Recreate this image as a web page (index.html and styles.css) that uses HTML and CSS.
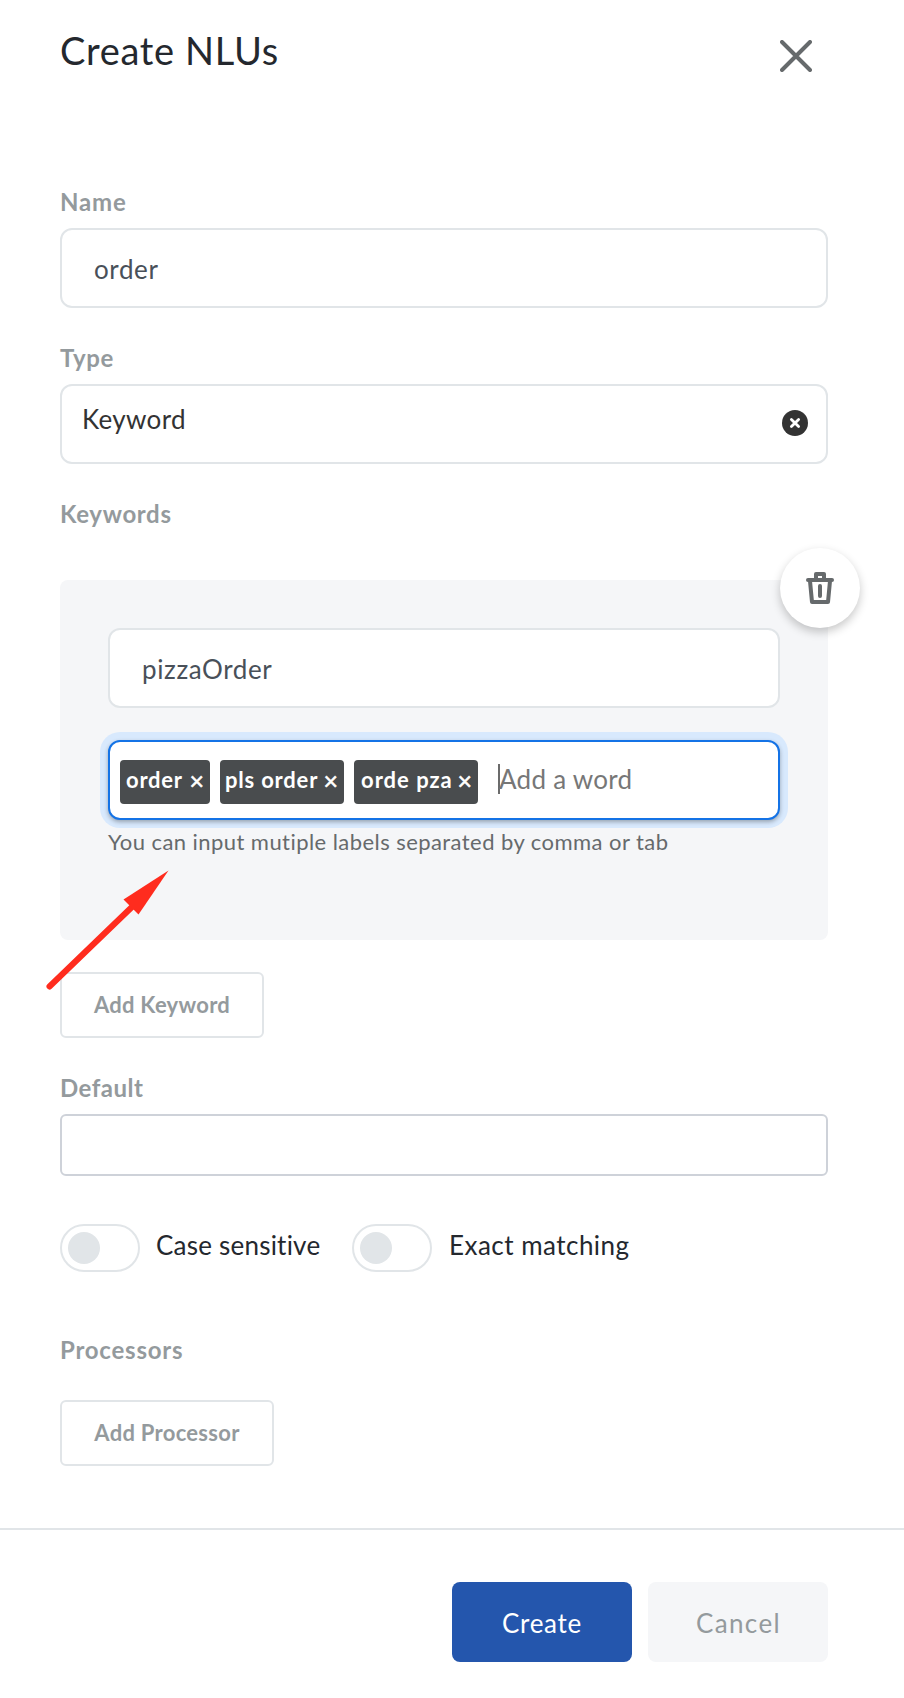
FILE: index.html
```html
<!DOCTYPE html>
<html lang="en">
<head>
<meta charset="utf-8">
<title>Create NLUs</title>
<link rel="stylesheet" href="styles.css">
</head>
<body>
<main class="dialog">
  <header class="dialog-header">
    <h1 class="title">Create NLUs</h1>
    <button class="close" aria-label="Close">
      <svg width="32" height="32" viewBox="0 0 32 32"><path d="M2 2L30 30M30 2L2 30" fill="none" stroke="#666a6c" stroke-width="4" stroke-linecap="round"/></svg>
    </button>
  </header>

  <section class="field">
    <div class="label label-name">Name</div>
    <div class="box box-order">order</div>
  </section>

  <section class="field">
    <div class="label label-type">Type</div>
    <div class="box box-select">
      <span class="select-value">Keyword</span>
      <svg class="clear" width="26" height="26" viewBox="0 0 26 26"><circle cx="13" cy="13" r="13" fill="#333"/><path d="M9.4 9.4L16.6 16.6M16.6 9.4L9.4 16.6" fill="none" stroke="#fff" stroke-width="2.8" stroke-linecap="round"/></svg>
    </div>
  </section>

  <div class="label label-keywords">Keywords</div>
  <section class="panel">
    <button class="trash" aria-label="Delete">
      <svg width="28" height="32" viewBox="0 0 28 32" fill="none" stroke="#666a6c" stroke-width="4" stroke-linecap="round" stroke-linejoin="round"><path d="M2 8H26"/><path d="M10 7V2H18V7"/><path d="M4 9L6 30H22L24 9"/><path d="M14 14V24"/></svg>
    </button>
    <div class="box box-pizza">pizzaOrder</div>
    <div class="box tags">
      <span class="tag tag-short"><span class="tag-order">order</span><span class="x">×</span></span>
      <span class="tag"><span class="tag-pls">pls order</span><span class="x">×</span></span>
      <span class="tag"><span class="tag-orde">orde pza</span><span class="x">×</span></span>
      <span class="placeholder">Add a word</span>
    </div>
    <p class="hint">You can input mutiple labels separated by comma or tab</p>
    <svg class="arrow" width="130" height="126" viewBox="45 868 130 126"><path d="M49.5 986.5L134 905" stroke="#ff2c1e" stroke-width="6" stroke-linecap="round"/><path d="M168.5 870.5L123.5 899.5L138.5 914.5Z" fill="#ff2c1e"/></svg>
  </section>
  <button class="outline outline-keyword">Add Keyword</button>

  <div class="label label-default">Default</div>
  <div class="default-box"></div>

  <div class="toggles">
    <span class="toggle"></span><span class="toggle-text case">Case sensitive</span>
    <span class="toggle"></span><span class="toggle-text exact">Exact matching</span>
  </div>

  <div class="label label-processors">Processors</div>
  <button class="outline outline-processor">Add Processor</button>
</main>
<footer class="footer">
  <button class="action create">Create</button>
  <button class="action cancel">Cancel</button>
</footer>
</body>
</html>
```

FILE: styles.css
```css
* { box-sizing: border-box; }
body { margin: 0; background: #fff; color: #24282e; font: 26px/32px "Lato", sans-serif; }
button { margin: 0; padding: 0; border: 0; background: none; font-family: inherit; display: block; }
.dialog { height: 1528px; padding: 19px 76px 0 60px; }
.dialog-header { display: flex; justify-content: space-between; height: 166px; }
.title { margin: 0; font-size: 38px; line-height: 62px; font-weight: 400; letter-spacing: .68px; }
.close { width: 32px; height: 32px; margin: 21px 16px 0 0; }
.close svg, .trash svg { display: block; }
.field { height: 156px; }
.label { height: 32px; font-size: 24px; line-height: 34px; font-weight: 700; color: #949a9d; }
.label-name { letter-spacing: .85px; }
.label-type { letter-spacing: .6px; }
.label-keywords { letter-spacing: .66px; }
.label-default { letter-spacing: .5px; margin-top: 33px; }
.label-processors { letter-spacing: .77px; margin-top: 61px; }
.box { display: flex; align-items: center; height: 80px; border: 2px solid #e1e5e8; border-radius: 12px; background: #fff; color: #495059; }
.field .box { margin-top: 11px; }
.box-order { padding: 2px 0 0 32px; letter-spacing: .6px; }
.box-select { justify-content: space-between; padding: 0 18px 0 20px; color: #333; }
.select-value { padding-bottom: 10px; letter-spacing: .33px; }
.clear { margin-bottom: 2px; }
.panel { position: relative; height: 360px; margin-top: 51px; padding: 48px 48px 0; border-radius: 8px; background: #f5f6f8; }
.trash { position: absolute; top: -32px; right: -32px; width: 80px; height: 80px; padding: 24px 26px; border-radius: 50%; background: #fff; box-shadow: 0 4px 10px rgba(0,0,0,.22); }
.box-pizza { padding: 2px 0 0 32px; letter-spacing: .61px; }
.tags { margin-top: 32px; padding: 4px 10px 0; gap: 10px; border-color: #1473e6; box-shadow: 0 2px 4px rgba(0,0,0,.3), 0 0 0 8px #d8e9fd; }
.tag { display: flex; justify-content: space-between; align-items: center; width: 124px; height: 44px; padding: 0 7px 4px 6px; border-radius: 4px; background: #494c4e; color: #fff; font-size: 22px; font-weight: 700; }
.tag-short { width: 90px; }
.tag-order { letter-spacing: .75px; }
.tag-pls { letter-spacing: .8px; margin-left: -1px; }
.tag-orde { letter-spacing: 1px; margin-left: 1px; }
.x { font-size: 25px; line-height: 30px; font-weight: 400; margin: 0 -1px; -webkit-text-stroke: .5px #fff; }
.placeholder { margin: -7px 0 0 10px; border-left: 2px solid #6b6b6b; line-height: 30px; color: #777; letter-spacing: .27px; text-indent: -1px; }
.hint { margin: 8px 0 0; font-size: 22px; line-height: 28px; letter-spacing: .44px; color: #666a6c; white-space: nowrap; }
.arrow { position: absolute; left: -15px; top: 288px; z-index: 1; }
.outline { height: 66px; padding-bottom: 1px; border: 2px solid #e1e5e8; border-radius: 6px; color: #949a9d; font-size: 22px; font-weight: 700; letter-spacing: .28px; }
.outline-keyword { width: 204px; margin-top: 32px; }
.outline-processor { width: 214px; margin-top: 35px; }
.default-box { height: 62px; margin-top: 11px; border: 2px solid #ced2d9; border-radius: 6px; }
.toggles { display: flex; margin-top: 48px; height: 48px; }
.toggle { width: 80px; height: 48px; padding: 6px; border: 2px solid #e1e5e8; border-radius: 24px; }
.toggle::before { content: ""; display: block; width: 32px; height: 32px; border-radius: 50%; background: #e1e5e8; }
.toggle-text { line-height: 42px; padding-left: 16px; white-space: nowrap; }
.case { width: 212px; letter-spacing: .22px; }
.exact { padding-left: 17px; letter-spacing: .48px; }
.footer { display: flex; justify-content: flex-end; gap: 16px; height: 170px; padding: 52px 76px 0 0; border-top: 2px solid #e1e5e8; }
.action { width: 180px; height: 80px; padding-top: 2px; border-radius: 8px; font-size: 26px; }
.create { background: #2456ad; color: #fff; letter-spacing: .75px; }
.cancel { padding-left: 1px; background: #f5f6f8; color: #949a9d; letter-spacing: 1.4px; }
```
